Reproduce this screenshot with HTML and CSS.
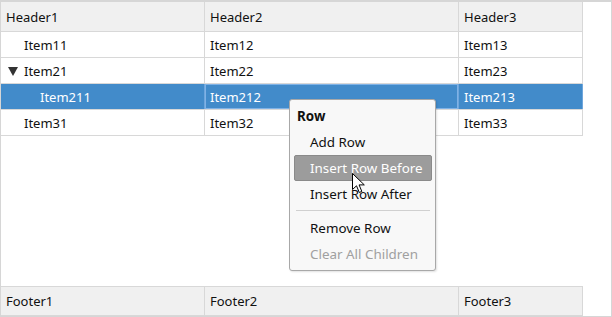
FILE: index.html
```html
<!DOCTYPE html>
<html>
<head>
<meta charset="utf-8">
<link rel="stylesheet" href="styles.css">
</head>
<body>
<div class="frame">
  <div class="grid">
    <div class="row head">
      <div class="cell">Header1</div>
      <div class="cell">Header2</div>
      <div class="cell">Header3</div>
    </div>
    <div class="row">
      <div class="cell l1">Item11</div>
      <div class="cell">Item12</div>
      <div class="cell">Item13</div>
    </div>
    <div class="row">
      <div class="cell l0"><span class="tri"></span>Item21</div>
      <div class="cell">Item22</div>
      <div class="cell">Item23</div>
    </div>
    <div class="row sel">
      <div class="cell l2">Item211</div>
      <div class="cell focus">Item212</div>
      <div class="cell">Item213</div>
    </div>
    <div class="row">
      <div class="cell l1">Item31</div>
      <div class="cell">Item32</div>
      <div class="cell">Item33</div>
    </div>
    <div class="spacer"></div>
    <div class="row foot">
      <div class="cell">Footer1</div>
      <div class="cell">Footer2</div>
      <div class="cell">Footer3</div>
    </div>
  </div>
  <div class="menu">
    <div class="mi title">Row</div>
    <div class="mi">Add Row</div>
    <div class="mi hot">Insert Row Before</div>
    <div class="mi">Insert Row After</div>
    <div class="sep"></div>
    <div class="mi">Remove Row</div>
    <div class="mi dis">Clear All Children</div>
  </div>
  <svg class="cursor" width="14" height="22" viewBox="0 0 14 22">
    <path d="M0.5 0.5 L0.5 16.5 L4.5 12.8 L7.3 19.5 L9.8 18.4 L7.1 11.9 L12.3 11.9 Z" fill="#fff" stroke="#000" stroke-width="1" stroke-linejoin="miter"/>
  </svg>
</div>
</body>
</html>
```

FILE: styles.css
```css
html, body {
  margin: 0;
  padding: 0;
  background: #fff;
}
.frame {
  position: relative;
  width: 612px;
  height: 317px;
  box-sizing: border-box;
  border: 1px solid #d6d6d6;
  border-top: 2px solid #d6d6d6;
  font-family: "Noto Sans", sans-serif;
  font-size: 13px;
  color: #111;
}
.grid {
  width: 582px;
  height: 314px;
  display: flex;
  flex-direction: column;
}
.row {
  display: grid;
  grid-template-columns: 204px 254px 124px;
  height: 26px;
  border-bottom: 1px solid #d8d8d8;
  box-sizing: border-box;
}
.row.head {
  height: 30px;
  background: #f0f0f0;
}
.row.foot {
  height: 30px;
  background: #f0f0f0;
  border-top: 1px solid #d8d8d8;
  border-bottom: 1px solid #d8d8d8;
}
.cell {
  border-right: 1px solid #d8d8d8;
  padding-left: 5px;
  display: flex;
  align-items: center;
  white-space: nowrap;
  box-sizing: border-box;
}
.l0 { padding-left: 7px; }
.l1 { padding-left: 23px; }
.l2 { padding-left: 39px; }
.tri {
  width: 0;
  height: 0;
  border-left: 5px solid transparent;
  border-right: 5px solid transparent;
  border-top: 9px solid #333;
  margin-right: 6px;
  margin-top: 1px;
}
.row.sel {
  background: #428bca;
  color: #fff;
}
.row.sel .cell {
  border-right-color: #6fa6dc;
}
.cell.focus {
  box-shadow: inset 0 0 0 1px #7fb2e6;
}
.spacer {
  flex: 1;
}
.menu {
  position: absolute;
  left: 288px;
  top: 97px;
  width: 147px;
  box-sizing: border-box;
  border: 1px solid #a8a8a8;
  border-radius: 3px;
  background: #f8f8f8;
  padding: 3px 3px 3px 4px;
  box-shadow: 1px 1px 2px rgba(0,0,0,0.12);
  font-size: 13.4px;
}
.mi {
  height: 26px;
  line-height: 26px;
  padding-left: 16px;
  border-radius: 2px;
  white-space: nowrap;
  color: #111;
}
.mi.title {
  font-weight: bold;
  padding-left: 3px;
}
.mi.hot {
  background: #9c9c9c;
  color: #fff;
  border: 1px solid #8a8a8a;
  box-sizing: border-box;
  line-height: 24px;
  padding-left: 15px;
}
.mi.dis {
  color: #a0a0a0;
}
.sep {
  height: 1px;
  background: #d0d0d0;
  margin: 3px 2px 4px 2px;
}
.cursor {
  position: absolute;
  left: 351px;
  top: 171px;
}
```
